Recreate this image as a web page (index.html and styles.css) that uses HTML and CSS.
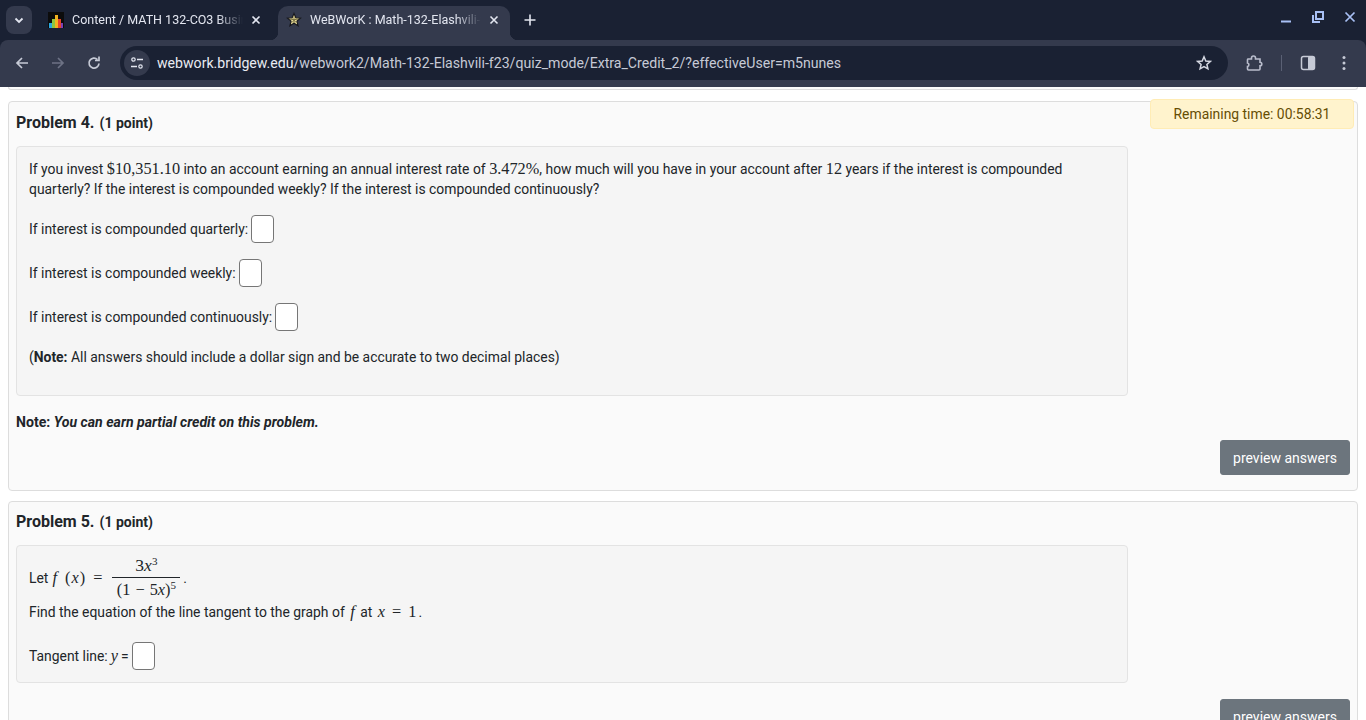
FILE: index.html
```html
<!DOCTYPE html>
<html lang="en">
<head>
	<meta charset="UTF-8">
	<meta name="viewport" content="width=device-width, initial-scale=1.0">
	<title>WeBWorK : Math-132-Elashvili-f23</title>
	<link rel="stylesheet" href="styles.css">
</head>
<body>
	<header class="chrome">
		<div class="tabstrip">
			<button class="tab-search">
				<svg width="12" height="12" viewBox="0 0 12 12"><path d="M2.5 4.5 6 8l3.5-3.5" fill="none" stroke="#e3e6f0" stroke-width="1.8"/></svg>
			</button>
			<div class="tab">
				<svg class="favicon" width="16" height="16" viewBox="0 0 16 16">
					<rect width="16" height="16" fill="#0c0c0c"/>
					<rect x="1" y="11" width="3" height="5" fill="#2aa8e0"/>
					<rect x="4" y="7" width="3" height="9" fill="#8cc63f"/>
					<rect x="7" y="3" width="3" height="13" fill="#f2b21f"/>
					<rect x="10" y="7" width="3" height="9" fill="#e5452b"/>
					<rect x="13" y="11" width="2" height="5" fill="#7b3fb5"/>
				</svg>
				<span class="tab-title">Content / MATH 132-CO3 Business Calculus</span>
				<svg class="tab-close" width="10" height="10" viewBox="0 0 10 10"><path d="M1.5 1.5l7 7M8.5 1.5l-7 7" stroke="#e3e6f0" stroke-width="1.6"/></svg>
			</div>
			<div class="tab active">
				<svg class="favicon" width="16" height="16" viewBox="0 0 16 16">
					<path d="M8 1.500 9.800 5.800l4.700.3-3.600 3 1.200 4.600L8 11.200l-4.100 2.500 1.200-4.600-3.600-3 4.700-.3z" fill="#e8dc9a" stroke="#15161c" stroke-width="1.100"/>
					<path d="M5.500 6.500l5 4M10.500 6.500l-5 4M8 4.500v6.500M4 7.500h8" stroke="#6a6337" stroke-width=".7"/>
				</svg>
				<span class="tab-title">WeBWorK : Math-132-Elashvili-f23 : Extra</span>
				<svg class="tab-close" width="10" height="10" viewBox="0 0 10 10"><path d="M1.5 1.5l7 7M8.5 1.5l-7 7" stroke="#e3e6f0" stroke-width="1.6"/></svg>
			</div>
			<svg class="new-tab" width="12" height="12" viewBox="0 0 12 12"><path d="M6 .5v11M.5 6h11" stroke="#e3e6f0" stroke-width="1.6"/></svg>
			<div class="window-buttons">
				<svg width="12" height="12" viewBox="0 0 12 12"><path d="M1 10.500h10" stroke="#a8c0f5" stroke-width="2"/></svg>
				<svg width="12" height="12" viewBox="0 0 12 12"><path d="M4 1h7v7H4zM1 4v7h7" fill="none" stroke="#a8c0f5" stroke-width="2"/></svg>
				<svg width="12" height="12" viewBox="0 0 12 12"><path d="M1.500 1.500l9 9M10.500 1.500l-9 9" stroke="#a8c0f5" stroke-width="1.700"/></svg>
			</div>
		</div>
		<div class="toolbar">
			<svg class="nav" width="16" height="16" viewBox="0 0 16 16"><path d="M14 8H3M8 3 3 8l5 5" fill="none" stroke="#c6cad6" stroke-width="1.700"/></svg>
			<svg class="nav" width="16" height="16" viewBox="0 0 16 16"><path d="M2 8h11M8 3l5 5-5 5" fill="none" stroke="#6d7285" stroke-width="1.700"/></svg>
			<svg class="nav" width="16" height="16" viewBox="0 0 16 16"><path d="M13 8.500A5 5 0 1 1 11.500 4.500M13 1.500v4H9" fill="none" stroke="#c6cad6" stroke-width="1.700"/></svg>
			<div class="omnibox">
				<span class="site-info">
					<svg width="14" height="14" viewBox="0 0 14 14"><circle cx="3.500" cy="3.500" r="1.700" fill="none" stroke="#e3e6f0" stroke-width="1.200"/><path d="M7 3.500h6M1 10.500h6" stroke="#e3e6f0" stroke-width="1.600"/><circle cx="10.500" cy="10.500" r="1.700" fill="none" stroke="#e3e6f0" stroke-width="1.200"/></svg>
				</span>
				<span class="url"><b>webwork.bridgew.edu</b>/webwork2/Math-132-Elashvili-f23/quiz_mode/Extra_Credit_2/?effectiveUser=m5nunes</span>
				<svg class="star" width="16" height="16" viewBox="0 0 16 16"><path d="M8 1.800 9.800 6l4.500.4-3.400 3 1 4.400L8 11.500l-3.900 2.300 1-4.400-3.400-3L6.200 6z" fill="none" stroke="#d5d8e2" stroke-width="1.500"/></svg>
			</div>
			<div class="toolbar-right">
				<svg width="18" height="18" viewBox="0 0 18 18"><path d="M3 5h3.500V4a2 2 0 0 1 4 0v1H15v3.200a1.800 1.800 0 0 1 0 3.600V15a1 1 0 0 1-1 1H3.500a1 1 0 0 1-1-1v-2.500a1.800 1.800 0 0 0 0-3.500V6a1 1 0 0 1 .5-1z" fill="none" stroke="#b9bdcc" stroke-width="1.600"/></svg>
				<span class="divider"></span>
				<svg width="16" height="16" viewBox="0 0 16 16"><rect x="1.500" y="1.500" width="13" height="13" rx="2" fill="none" stroke="#c6cad6" stroke-width="1.500"/><rect x="8" y="1.500" width="6.500" height="13" rx="1" fill="#c6cad6"/></svg>
				<svg class="menu" width="4" height="16" viewBox="0 0 4 16"><circle cx="2" cy="2.500" r="1.500" fill="#c6cad6"/><circle cx="2" cy="8" r="1.500" fill="#c6cad6"/><circle cx="2" cy="13.500" r="1.500" fill="#c6cad6"/></svg>
			</div>
		</div>
	</header>

	<main class="page">
		<div class="timer">Remaining time: 00:58:31</div>
		<div class="card-end"></div>

		<section class="problem">
			<h3 class="head-4"><span class="num">Problem 4.</span><span class="pts">(1 point)</span></h3>
			<div class="body">
				<p class="line">If you invest <span class="m">$10,351.10</span> into an account earning an annual interest rate of <span class="m">3.472%</span>, how much will you have in your account after <span class="m">12</span> years if the interest is compounded quarterly? If the interest is compounded weekly? If the interest is compounded continuously?</p>
				<p class="ans first">If interest is compounded quarterly:<span class="box"></span></p>
				<p class="ans">If interest is compounded weekly:<span class="box"></span></p>
				<p class="ans">If interest is compounded continuously:<span class="box"></span></p>
				<p class="line note">(<b>Note:</b> All answers should include a dollar sign and be accurate to two decimal places)</p>
			</div>
			<p class="partial"><b>Note: <i>You can earn partial credit on this problem.</i></b></p>
			<div class="actions"><button class="preview">preview answers</button></div>
		</section>

		<section class="problem">
			<h3><span class="num">Problem 5.</span><span class="pts">(1 point)</span></h3>
			<div class="body body-5">
				<div class="let">Let<span class="m eq lhs"><i>f</i> (<i>x</i>) =</span>
					<span class="frac">
						<span class="top m">3<i>x</i><sup>3</sup></span>
						<span class="bot m">(1 &minus; 5<i>x</i>)<sup>5</sup></span>
					</span><span class="dot">.</span>
				</div>
				<p class="line">Find the equation of the line tangent to the graph of <span class="m eq"><i>f</i></span> at <span class="m eq"><i>x</i> = 1</span>.</p>
				<p class="ans tangent">Tangent line:<span class="m"><i>y</i></span>=<span class="box"></span></p>
			</div>
			<div class="actions"><button class="preview">preview answers</button></div>
		</section>
	</main>
</body>
</html>
```

FILE: styles.css
```css
* {
	box-sizing: border-box;
}

html, body {
	height: 720px;
	overflow: hidden;
}

body {
	margin: 0;
	font-family: Roboto, "Liberation Sans", sans-serif;
	font-size: 13.9px;
	line-height: 20px;
	color: #212529;
	background: #fff;
}

/* browser chrome */
.chrome {
	height: 87px;
	background: #1a2133;
	color: #e3e6f0;
	font-size: 12.5px;
}

.tabstrip {
	height: 40px;
	display: flex;
	align-items: center;
	padding-left: 6px;
}

.tab-search {
	width: 26px;
	height: 28px;
	border: none;
	border-radius: 8px;
	padding: 0;
	display: flex;
	align-items: center;
	justify-content: center;
	background: #343a4d;
}

.tab {
	position: relative;
	width: 246px;
	height: 34px;
	margin-top: 6px;
	padding: 0 17px 6px 16px;
	display: flex;
	align-items: center;
	gap: 8px;
	border-radius: 10px 10px 0 0;
}

.tab.active {
	width: 232px;
	padding: 0 11px 6px 8px;
	background: #343a4d;
}

/* concave feet of the active tab */
.tab.active::before,
.tab.active::after {
	content: "";
	position: absolute;
	bottom: 0;
	width: 8px;
	height: 8px;
}

.tab.active::before {
	left: -8px;
	background: radial-gradient(circle at 0 0, transparent 8px, #343a4d 8.5px);
}

.tab.active::after {
	right: -8px;
	background: radial-gradient(circle at 100% 0, transparent 8px, #343a4d 8.5px);
}

.tab-title {
	flex: 1;
	overflow: hidden;
	white-space: nowrap;
	-webkit-mask-image: linear-gradient(to right, #000 85%, transparent);
	mask-image: linear-gradient(to right, #000 85%, transparent);
}

.favicon {
	flex: none;
}

.tab-close {
	flex: none;
}

.new-tab {
	margin-left: 14px;
}

.window-buttons {
	margin-left: auto;
	width: 96px;
	padding: 0 10px 6px;
	display: flex;
	justify-content: space-between;
	align-items: center;
	align-self: stretch;
}

.toolbar {
	height: 47px;
	padding: 6px 12px 7px 14px;
	display: flex;
	align-items: center;
	background: #343a4d;
	border-radius: 8px 8px 0 0;
}

.nav {
	margin-right: 20px;
	flex: none;
}

.omnibox {
	width: 1108px;
	height: 34px;
	margin-left: -2px;
	padding: 0 16px 0 4px;
	display: flex;
	align-items: center;
	background: #1a2133;
	border-radius: 17px;
}

.site-info {
	width: 26px;
	height: 26px;
	flex: none;
	border-radius: 50%;
	background: #343a4d;
	display: flex;
	align-items: center;
	justify-content: center;
}

.url {
	flex: 1;
	margin-left: 7px;
	font-size: 14.12px;
	color: #c6cad6;
	white-space: nowrap;
}

.url b {
	font-weight: 400;
	color: #e9ebf2;
}

.toolbar-right {
	margin-left: 17px;
	flex: 1;
	display: flex;
	align-items: center;
}

.divider {
	width: 1px;
	height: 16px;
	margin: 0 18px;
	background: #5a6074;
}

.menu {
	margin-left: 26px;
}

/* page */
.page {
	position: relative;
	padding: 0 8px;
}

.card-end {
	height: 3px;
	margin-bottom: 11px;
	background: #fafafa;
	border: 1px solid #ddd;
	border-top: none;
	border-radius: 0 0 4px 4px;
}

.timer {
	position: absolute;
	top: 12px;
	right: 12px;
	width: 204px;
	height: 30px;
	line-height: 29px;
	text-align: center;
	color: #664d03;
	background: #fff3cd;
	border: 1px solid #ffecb5;
	border-radius: 4px;
}

.problem {
	margin-bottom: 10px;
	padding: 10px 7px 15px;
	background: #fafafa;
	border: 1px solid #ddd;
	border-radius: 4px;
}

.problem h3 {
	margin: 0;
	height: 20px;
	display: flex;
	align-items: baseline;
	gap: 5px;
	line-height: 20px;
	font-weight: 700;
	font-size: 14px;
}

.problem .head-4 {
	margin-top: 1px;
}

.num {
	font-size: 16px;
}

.body {
	width: 1112px;
	margin-top: 13px;
	height: 250px;
	padding: 12px 12px 0;
	background: #f5f5f5;
	border: 1px solid #e3e3e3;
	border-radius: 4px;
}

.body-5 {
	height: 138px;
	padding-top: 6px;
}

.line {
	margin: 0;
}

.m {
	font-family: "Liberation Serif", serif;
	font-size: 16.3px;
}

.eq {
	margin: 0 2px;
	word-spacing: 3px;
}

.lhs {
	letter-spacing: 1px;
	word-spacing: 2px;
}

.ans {
	margin: 0;
	height: 28px;
	display: flex;
	align-items: center;
	gap: 3px;
	white-space: pre;
}

.ans.first {
	margin-top: 16px;
}

.ans + .ans {
	margin-top: 16px;
}

.box {
	width: 23px;
	height: 28px;
	background: #fff;
	border: 1px solid #767676;
	border-radius: 4px;
}

.note {
	margin-top: 16px;
}

.let {
	height: 52px;
	display: flex;
	align-items: center;
	gap: 2px;
	margin-bottom: -2px;
}

.frac {
	display: inline-flex;
	flex-direction: column;
	align-items: center;
	margin-left: 5px;
	width: 68px;
}

.frac .top {
	height: 26px;
	padding-top: 3px;
	font-size: 17.5px;
	border-bottom: 1px solid #212529;
	width: 100%;
	text-align: center;
}

.frac .bot {
	padding-top: 2px;
	height: 26px;
	word-spacing: 1px;
}

.frac sup {
	font-size: 11px;
	line-height: 0;
	vertical-align: 6px;
}

.dot {
	margin-left: 1px;
}

.ans.tangent {
	margin-top: 20px;
}

.partial {
	margin: 16px 0 0;
	font-size: 14.1px;
}

.actions {
	margin-top: 8px;
	display: flex;
	justify-content: flex-end;
}

.preview {
	width: 130px;
	height: 35px;
	padding: 0;
	font-family: inherit;
	font-size: 14px;
	color: #fff;
	background: #6c757d;
	border: 1px solid #6c757d;
	border-radius: 3px;
}

.body-5 + .actions {
	margin-top: 16px;
}
```
